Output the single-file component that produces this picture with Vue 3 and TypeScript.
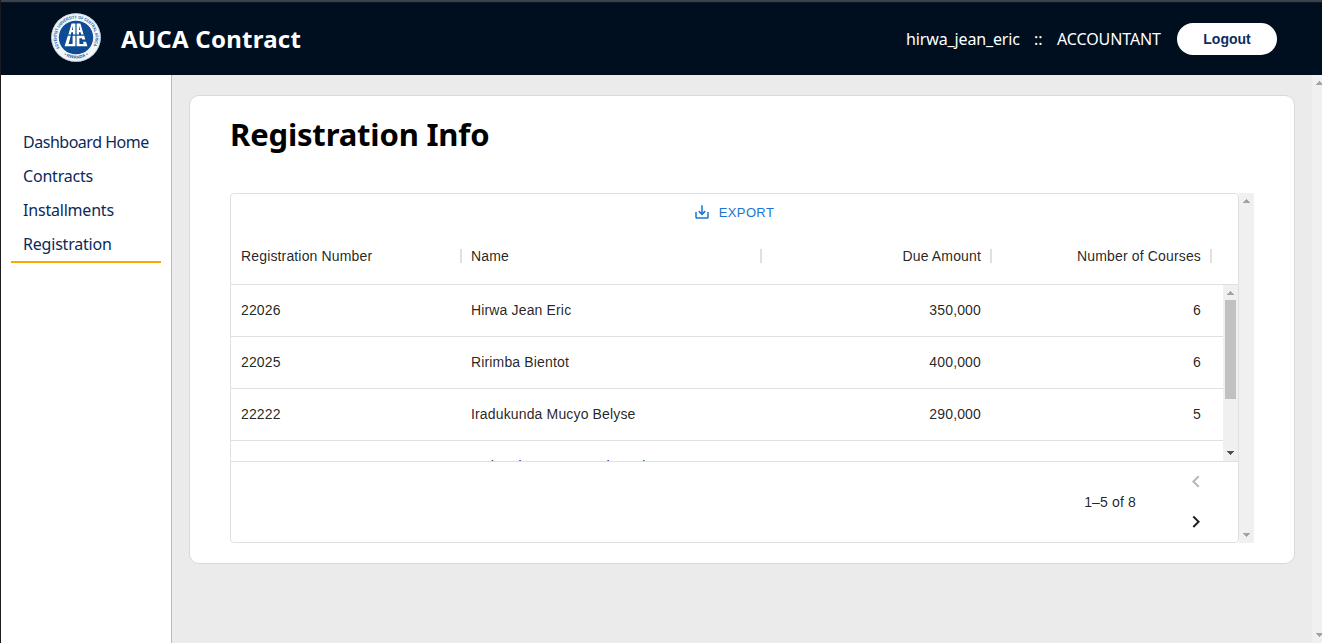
<script setup lang="ts">
interface Student {
  id: string
  name: string
  due: string
  courses: number
}

const navItems: string[] = ['Dashboard Home', 'Contracts', 'Installments', 'Registration']
const activeItem = 'Registration'

const students: Student[] = [
  { id: '22026', name: 'Hirwa Jean Eric', due: '350,000', courses: 6 },
  { id: '22025', name: 'Ririmba Bientot', due: '400,000', courses: 6 },
  { id: '22222', name: 'Iradukunda Mucyo Belyse', due: '290,000', courses: 5 },
  { id: '', name: 'Mukandera Umwamahozade', due: '', courses: 5 },
]
</script>

<template>
  <div class="app">
    <header class="topbar">
      <div class="brand">
        <svg class="logo" viewBox="0 0 50 50" width="50" height="49" preserveAspectRatio="none">
          <defs>
            <path id="ring" d="M9.4 36.4 A19.3 19.3 0 1 1 40.6 36.4" />
            <path id="ringBottom" d="M10.5 41 A21.8 21.8 0 0 0 39.5 41" />
          </defs>
          <circle cx="25" cy="25" r="24.8" fill="#f5f8fb" />
          <circle cx="25" cy="25" r="24.3" fill="none" stroke="#a9bfd8" stroke-width=".6" />
          <circle cx="25" cy="25" r="17.2" fill="#0d4b94" />
          <text class="ring-text"><textPath href="#ring" startOffset="1" textLength="80" lengthAdjust="spacingAndGlyphs">ADVENTIST UNIVERSITY OF CENTRAL AFRICA</textPath></text>
          <text class="ring-text" text-anchor="middle"><textPath href="#ringBottom" startOffset="50%">• RWANDA •</textPath></text>
          <g fill="#fff" fill-rule="evenodd">
            <path d="M20.6 10.8 H24.4 V22 H22 V19.6 H20.4 L19.8 22 H17.4 Z M22 13 L20.9 17.4 H22 Z" />
            <path d="M25.6 10.8 H29.4 L32.6 22 H30.2 L29.6 19.6 H28 V22 H25.6 Z M28 13 L29.1 17.4 H28 Z" />
            <path d="M16.8 23.2 H19.8 L17.6 31.6 H21.6 V23.2 H24.4 V34 H13.6 Z" />
            <path d="M25.6 23.2 H33.2 L34.3 27 H31.3 L30.9 25.7 H28.4 V31.6 H32.6 L32 29.4 H35 L36.4 34 H25.6 Z" />
          </g>
        </svg>
        <span class="brand-name">AUCA Contract</span>
      </div>
      <div class="account">
        <span class="user">hirwa_jean_eric</span>
        <span class="colons">::</span>
        <span class="role">ACCOUNTANT</span>
        <button class="logout">Logout</button>
      </div>
    </header>

    <div class="body">
      <nav class="sidebar">
        <a v-for="item in navItems" :key="item" class="nav-item" :class="{ active: item === activeItem, long: item.length > 12 }">{{ item }}</a>
      </nav>

      <main class="content">
        <section class="card">
          <h1>Registration Info</h1>
          <div class="grid-wrap">
            <div class="grid">
              <div class="toolbar">
                <button class="export">
                  <svg viewBox="0 0 24 24" width="18" height="18">
                    <path fill="currentColor" d="M19 12v7H5v-7H3v7c0 1.1.9 2 2 2h14c1.1 0 2-.9 2-2v-7h-2zm-6 .67l2.59-2.58L17 11.5l-5 5-5-5 1.41-1.41L11 12.67V3h2z" />
                  </svg>
                  <span>EXPORT</span>
                </button>
              </div>
              <div class="row head">
                <div class="cell">Registration Number</div>
                <div class="cell">Name</div>
                <div class="cell num">Due Amount</div>
                <div class="cell num">Number of Courses</div>
              </div>
              <div class="viewport">
                <div class="rows">
                  <div v-for="(s, i) in students" :key="i" class="row">
                    <div class="cell">{{ s.id }}</div>
                    <div class="cell">{{ s.name }}</div>
                    <div class="cell num">{{ s.due }}</div>
                    <div class="cell num">{{ s.courses }}</div>
                  </div>
                </div>
                <div class="scroll inner">
                  <svg width="15" height="15"><path d="M4 10h7v-1h-1v-1h-1v-1h-1v-1h-1v1h-1v1h-1v1h-1z" fill="#a3a3a3" /></svg>
                  <i class="thumb"></i>
                  <svg class="down" width="15" height="15"><path d="M4 5h7v1h-1v1h-1v1h-1v1h-1v-1h-1v-1h-1v-1h-1z" fill="#505050" /></svg>
                </div>
              </div>
              <footer class="pager">
                <span>1–5 of 8</span>
                <div class="arrows">
                  <svg class="off" viewBox="0 0 24 24" width="24" height="24"><path d="M15.41 16.09l-4.58-4.59 4.58-4.59L14 5.5l-6 6 6 6z" /></svg>
                  <svg class="on" viewBox="0 0 24 24" width="24" height="24"><path d="M8.59 16.34l4.58-4.59-4.58-4.59L10 5.75l6 6-6 6z" /></svg>
                </div>
              </footer>
            </div>
            <div class="scroll">
              <svg width="15" height="15"><path d="M4 10h7v-1h-1v-1h-1v-1h-1v-1h-1v1h-1v1h-1v1h-1z" fill="#a3a3a3" /></svg>
              <svg class="down" width="15" height="15"><path d="M4 5h7v1h-1v1h-1v1h-1v1h-1v-1h-1v-1h-1v-1h-1z" fill="#a3a3a3" /></svg>
            </div>
          </div>
        </section>
      </main>
      <div class="scroll page">
        <svg width="15" height="15"><path d="M4 10h7v-1h-1v-1h-1v-1h-1v-1h-1v1h-1v1h-1v1h-1z" fill="#a3a3a3" /></svg>
        <svg class="down" width="15" height="15"><path d="M4 5h7v1h-1v1h-1v1h-1v1h-1v-1h-1v-1h-1v-1h-1z" fill="#a3a3a3" /></svg>
      </div>
    </div>
  </div>
</template>

<style>
html, body { margin: 0; overflow: hidden; }
</style>

<style scoped>
* { box-sizing: border-box; }
.app {
  width: 1322px;
  height: 643px;
  display: flex;
  flex-direction: column;
  border-left: 1px solid #1b1c20;
  overflow: hidden;
  font-family: "Noto Sans", sans-serif;
  font-size: 16px;
}
.topbar {
  height: 75px;
  flex: none;
  border-top: 2px solid #384351;
  box-shadow: inset 0 1px #10141b;
  background: #000f20;
  color: #fff;
  display: flex;
  justify-content: space-between;
  padding: 0 45px 0 50px;
}
.brand, .account { display: flex; align-items: center; }
.logo { display: block; margin-top: -2px; }
.ring-text { font: bold 4.5px "Liberation Sans", sans-serif; fill: #235b9c; }
.brand-name { margin-left: 20px; font-size: 24px; font-weight: 700; letter-spacing: .25px; white-space: nowrap; }
.account { white-space: nowrap; }
.user { width: 128px; letter-spacing: -.13px; }
.colons { width: 23px; }
.role { width: 120px; letter-spacing: -.1px; }
.logout {
  width: 100px;
  height: 32px;
  border: 0;
  padding: 0;
  border-radius: 16px;
  background: #fff;
  color: #0c2d63;
  font: bold 14px "Liberation Sans", sans-serif;
}
.body { flex: 1; display: flex; min-height: 0; }
.sidebar {
  width: 171px;
  flex: none;
  border-right: 1px solid #bbb;
  background: #fff;
  padding: 50px 10px 0;
}
.nav-item {
  display: flex;
  align-items: center;
  height: 34px;
  padding: 0 12px;
  color: #0b2a5b;
  letter-spacing: -.2px;
  white-space: nowrap;
}
.nav-item.long { letter-spacing: -.48px; }
.nav-item.active { box-shadow: 0 2px #ffa500; }
.content { flex: 1; background: #ebebeb; padding: 20px 17px; min-width: 0; }
.card {
  height: 469px;
  background: #fff;
  border: 1px solid #d9d9d9;
  border-radius: 10px;
  padding: 18px 40px;
}
h1 { margin: 0; font-size: 31px; line-height: 40px; letter-spacing: -.18px; white-space: nowrap; }
.grid-wrap { margin-top: 39px; height: 350px; display: flex; }
.grid {
  flex: 1;
  border: 1px solid #e0e0e0;
  border-radius: 4px;
  display: flex;
  flex-direction: column;
  font: 14px "Liberation Sans", sans-serif;
  letter-spacing: .15px;
  color: rgba(0, 0, 0, .87);
}
.toolbar { height: 34px; flex: none; display: flex; justify-content: center; padding: 3px 2px 0 0; }
.export {
  display: flex;
  align-items: center;
  gap: 8px;
  height: 30px;
  border: 0;
  padding: 0;
  background: none;
  color: #1976d2;
  font: 13px "Liberation Sans", sans-serif;
  letter-spacing: .37px;
}
.row { display: grid; grid-template-columns: 230px 300px 230px 220px; height: 52px; border-bottom: 1px solid #e0e0e0; }
.row.head { height: 57px; flex: none; }
.cell { display: flex; align-items: center; padding: 0 10px; white-space: nowrap; }
.rows .cell { height: 50px; }
.num { justify-content: flex-end; }
.head .cell { position: relative; }
.head .cell::after { content: ""; position: absolute; right: -1px; top: 21px; width: 2px; height: 14px; background: #e0e0e0; }
.viewport { height: 176px; flex: none; display: flex; overflow: hidden; }
.rows { flex: 1; }
.scroll { width: 15px; flex: none; background: #f0f0f0; display: flex; flex-direction: column; }
.scroll svg { display: block; flex: none; }
.down { margin-top: auto; }
.page { width: 10px; overflow: hidden; }
.thumb { width: 11px; height: 99px; margin-left: 2px; background: #c1c1c1; }
.pager { flex: 1; border-top: 1px solid #e0e0e0; display: flex; align-items: center; justify-content: flex-end; padding-right: 30px; }
.arrows { display: flex; flex-direction: column; gap: 16px; margin-left: 48px; }
.arrows svg { display: block; }
.off { opacity: .28; }
.on { fill: #212121; }
</style>
